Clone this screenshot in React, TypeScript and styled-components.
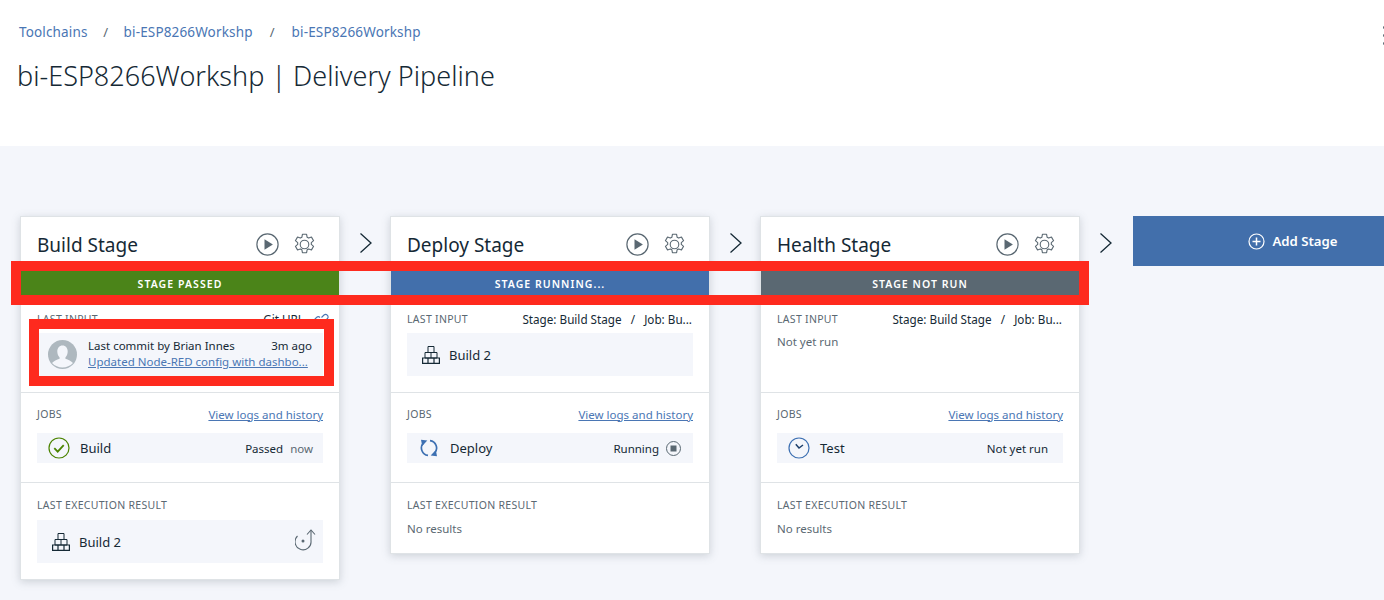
import React from "react";
import styled, { createGlobalStyle } from "styled-components";

const Global = createGlobalStyle`
  html, body { margin: 0; padding: 0; background: #ffffff; }
  body { font-family: "Noto Sans", "Liberation Sans", sans-serif; color: #152935; }
  * { box-sizing: border-box; }
`;

const Page = styled.div`
  position: relative;
  width: 1384px;
  height: 600px;
  overflow: hidden;
  background: #f4f6fb;
`;

const Header = styled.header`
  height: 146px;
  background: #ffffff;
  padding: 23px 0 0 18px;
`;

const CrumbRow = styled.div`
  display: flex;
  align-items: center;
  height: 18px;
  padding-left: 1px;
  margin-right: -5px;
`;

const Crumb = styled.a`
  font-size: 13.5px;
  letter-spacing: 0.15px;
  line-height: 18px;
  color: #4a76b4;
  white-space: nowrap;
`;

const Slash = styled.span<{ $width: number }>`
  font-size: 13px;
  color: #5a6872;
  width: ${(p) => p.$width}px;
  text-align: center;
`;

const Kebab = styled.div`
  margin-left: auto;
  width: 6px;
  display: flex;
  flex-direction: column;
  gap: 5px;
  margin-top: 6px;
`;

const Dot = styled.span`
  width: 3px;
  height: 3px;
  border-radius: 50%;
  background: #5a6872;
`;

const Title = styled.h1`
  margin: 17px 0 0 -1px;
  font-size: 27px;
  letter-spacing: 0.02px;
  line-height: 36px;
  font-weight: 300;
  color: #152935;
  white-space: nowrap;
`;

const Pipeline = styled.main`
  display: flex;
  align-items: flex-start;
  padding: 70px 0 0 20px;
`;

const Card = styled.section`
  flex: none;
  width: 320px;
  background: #ffffff;
  border: 1px solid #dfe3e6;
  box-shadow: 0 2px 8px rgba(90, 104, 114, 0.25);
`;

const CardHead = styled.div`
  height: 54px;
  display: flex;
  align-items: center;
  padding: 1px 24px 0 16px;
`;

const CardTitle = styled.h2`
  margin: 0;
  flex: 1;
  font-size: 19px;
  font-weight: 400;
  color: #152935;
`;

const HeadIcons = styled.div`
  display: flex;
  align-items: center;
  gap: 15px;
`;

const StatusBar = styled.div<{ $color: string }>`
  height: 24px;
  padding-top: 1px;
  background: ${(p) => p.$color};
  color: #ffffff;
  font-size: 10.5px;
  font-weight: 600;
  letter-spacing: 1.05px;
  display: flex;
  align-items: center;
  justify-content: center;
`;

const Section = styled.div<{ $height: number; $top: number }>`
  height: ${(p) => p.$height}px;
  padding: ${(p) => p.$top}px 16px 0;
  border-bottom: 1px solid #dfe3e6;
  &:last-child {
    border-bottom: 0;
    height: auto;
    padding-bottom: 16px;
  }
`;

const SectionHead = styled.div<{ $gap: number }>`
  display: flex;
  align-items: center;
  justify-content: space-between;
  height: 16px;
  margin-bottom: ${(p) => p.$gap}px;
`;

const Label = styled.span`
  font-size: 10.5px;
  letter-spacing: 0.3px;
  color: #5a6872;
`;

const Source = styled.span<{ $flush?: boolean }>`
  display: flex;
  align-items: center;
  gap: 8px;
  margin-right: ${(p) => (p.$flush ? -6 : 1)}px;
  font-size: 11.7px;
  color: #152935;
  white-space: pre;
`;

const LogLink = styled.a`
  font-size: 11.5px;
  color: #4a76b4;
  text-decoration: underline;
`;

const Muted = styled.div`
  font-size: 11.5px;
  line-height: 17px;
  color: #5a6872;
`;

const Tile = styled.div<{ $height: number }>`
  height: ${(p) => p.$height}px;
  background: #f4f6fb;
  display: flex;
  align-items: center;
  font-size: 13px;
  color: #152935;
`;

const TileIcon = styled.span`
  flex: none;
  width: 43px;
  display: flex;
  justify-content: center;
`;

const BlockSlot = styled.span`
  flex: none;
  width: 42px;
  padding-left: 6px;
  display: flex;
  justify-content: center;
`;

const Spacer = styled.span`
  flex: 1;
`;

const JobStatus = styled.span<{ $right: number }>`
  font-size: 11.5px;
  margin-right: ${(p) => p.$right}px;
  display: flex;
  align-items: center;
  gap: 7px;
`;

const Faint = styled.span`
  color: #5a6872;
`;

const Avatar = styled.span`
  flex: none;
  width: 29px;
  height: 29px;
  margin: 0 11px;
  display: flex;
`;

const Commit = styled.div`
  flex: 1;
  min-width: 0;
  margin-top: -1px;
  padding-right: 11px;
  font-size: 11.5px;
  line-height: 16px;
`;

const CommitTop = styled.div`
  display: flex;
  justify-content: space-between;
`;

const CommitLink = styled.a`
  color: #4a76b4;
  text-decoration: underline;
`;

const Arrow = styled.div`
  flex: none;
  width: 50px;
  height: 50px;
  padding: 3px 0 0 2px;
  display: flex;
  align-items: center;
  justify-content: center;
`;

const AddStage = styled.button`
  flex: none;
  width: 320px;
  height: 50px;
  margin-left: 3px;
  border: 0;
  background: #426fab;
  color: #ffffff;
  font-family: inherit;
  font-size: 13.2px;
  font-weight: 600;
  display: flex;
  align-items: center;
  justify-content: center;
  gap: 7px;
`;

const Annotation = styled.div<{ $left: number; $top: number; $width: number; $height: number }>`
  position: absolute;
  left: ${(p) => p.$left}px;
  top: ${(p) => p.$top}px;
  width: ${(p) => p.$width}px;
  height: ${(p) => p.$height}px;
  border: 10px solid #fe2a1e;
  pointer-events: none;
`;

const PlayIcon = () => (
  <svg width="23" height="23" viewBox="0 0 23 23" fill="none">
    <circle cx="11.5" cy="11.5" r="10.6" stroke="#5a6872" strokeWidth="1.2" />
    <path d="M8.5 6.3v10.4l8.4-5.2z" fill="#5a6872" />
  </svg>
);

const GearIcon = () => (
  <svg width="21" height="23" viewBox="0 0 21 23" fill="none" stroke="#5a6872" strokeWidth="1.1" strokeLinejoin="round">
    <path d="M8.4 1.3h4.2l.5 2.9 1.6.9 2.8-1 2.1 3.6-2.3 1.9v1.8l2.3 1.9-2.1 3.6-2.8-1-1.6.9-.5 2.9H8.4l-.5-2.9-1.6-.9-2.8 1-2.1-3.6 2.3-1.9V9.6L1.4 7.700l2.1-3.6 2.8 1 1.6-.9z" />
    <circle cx="10.5" cy="11.5" r="4.3" />
  </svg>
);

const LinkIcon = () => (
  <svg width="17" height="15" viewBox="0 0 17 15" fill="none" stroke="#4a76b4" strokeWidth="1.1">
    <path d="M7.5 9.5 5 12a2.5 2.5 0 0 1-3.5-3.5l3-3a2.5 2.5 0 0 1 3.5 0" />
    <path d="M9.5 5.5 12 3a2.5 2.5 0 0 1 3.5 3.5l-3 3a2.5 2.5 0 0 1-3.5 0" />
  </svg>
);

const BlocksIcon = () => (
  <svg width="18" height="18" viewBox="0 0 18 18" fill="none" stroke="#152935" strokeWidth="1">
    <path d="M6 .5h6v6H6zM3 6.500h12v5.500H3zM9 6.500V12" />
    <path d="M.6 12h16.800v5.400H.6zM6 12v5.400M12 12v5.400" strokeWidth="1.200" />
  </svg>
);

const PassedIcon = () => (
  <svg width="22" height="22" viewBox="0 0 22 22" fill="none" stroke="#4b8400">
    <circle cx="11" cy="11" r="10" strokeWidth="1.2" />
    <path d="m6.3 11.2 3.4 3.4 6-6.4" strokeWidth="1.8" />
  </svg>
);

const RunningIcon = () => (
  <svg width="18" height="18" viewBox="0 0 18 18" fill="none" stroke="#3d70b2" strokeWidth="1.7">
    <path d="M8 16.400A7.500 7.500 0 0 1 3.500 3.800" />
    <path d="M1 .8 7.300 1.500 2.200 7z" fill="#3d70b2" stroke="none" />
    <path d="M10 1.600A7.500 7.500 0 0 1 14.500 14.200" />
    <path d="M17 17.200 10.700 16.500 15.800 11z" fill="#3d70b2" stroke="none" />
  </svg>
);

const StopIcon = () => (
  <svg width="15" height="15" viewBox="0 0 15 15" fill="none">
    <circle cx="7.500" cy="7.500" r="7" stroke="#5a6872" strokeWidth="1" />
    <rect x="4.500" y="4.500" width="6" height="6" fill="#5a6872" />
  </svg>
);

const ClockIcon = () => (
  <svg width="22" height="22" viewBox="0 0 22 22" fill="none">
    <circle cx="11" cy="11" r="10" stroke="#3d70b2" strokeWidth="1.2" />
    <path d="M7.800 7.200 11 11l4-3" stroke="#1d3f6b" strokeWidth="1.500" />
  </svg>
);

const RerunIcon = () => (
  <svg width="22" height="27" viewBox="0 0 22 27" fill="none" stroke="#5a6872" strokeWidth="1.100">
    <path d="M2.500 8A8 8 0 1 0 16 13V2" />
    <path d="M12 6.500 16 2l4 4.500" />
    <circle cx="8" cy="13" r="1.500" fill="#5a6872" stroke="none" />
  </svg>
);

const ChevronIcon = () => (
  <svg width="14" height="22" viewBox="0 0 14 22" fill="none" stroke="#152935" strokeWidth="1.300">
    <path d="m1.500 1.500 10.500 9.500-10.500 9.500" />
  </svg>
);

const PlusIcon = () => (
  <svg width="17" height="17" viewBox="0 0 17 17" fill="none" stroke="#ffffff">
    <circle cx="8.500" cy="8.500" r="7.500" strokeWidth="1.200" />
    <path d="M8.500 4.500v8M4.500 8.500h8" strokeWidth="1.500" />
  </svg>
);

const PersonIcon = () => (
  <svg width="29" height="29" viewBox="0 0 29 29">
    <circle cx="14.500" cy="14.500" r="14.500" fill="#aeb8bf" />
    <path d="M14.500 5.500c3.300 0 5.200 2.700 5.200 6 0 2.600-1 4.600-2.300 5.900v1.300c2.800 1 6 2.200 7.600 4.300a14.500 14.500 0 0 1-21 0c1.600-2.100 4.800-3.300 7.600-4.300v-1.300c-1.300-1.300-2.300-3.300-2.300-5.900 0-3.300 1.900-6 5.200-6z" fill="#f4f6fb" />
  </svg>
);

const BuildTile = ({ height, action }: { height: number; action?: React.ReactNode }) => (
  <Tile $height={height}>
    <BlockSlot>
      <BlocksIcon />
    </BlockSlot>
    Build 2
    <Spacer />
    {action}
  </Tile>
);

const StageSource = () => <Source>{"Stage: Build Stage   /   Job: Bu..."}</Source>;

type StageProps = {
  name: string;
  color: string;
  status: string;
  source: React.ReactNode;
  input: React.ReactNode;
  job: React.ReactNode;
  result: React.ReactNode;
};

const Stage = ({ name, color, status, source, input, job, result }: StageProps) => (
  <Card>
    <CardHead>
      <CardTitle>{name}</CardTitle>
      <HeadIcons>
        <PlayIcon />
        <GearIcon />
      </HeadIcons>
    </CardHead>
    <StatusBar $color={color}>{status}</StatusBar>
    <Section $height={98} $top={16}>
      <SectionHead $gap={6}>
        <Label>LAST INPUT</Label>
        {source}
      </SectionHead>
      {input}
    </Section>
    <Section $height={90} $top={13}>
      <SectionHead $gap={11}>
        <Label>JOBS</Label>
        <LogLink>View logs and history</LogLink>
      </SectionHead>
      {job}
    </Section>
    <Section $height={0} $top={14}>
      <SectionHead $gap={7}>
        <Label>LAST EXECUTION RESULT</Label>
      </SectionHead>
      {result}
    </Section>
  </Card>
);

export default function App() {
  return (
    <Page>
      <Global />
      <Header>
        <CrumbRow>
          <Crumb>Toolchains</Crumb>
          <Slash $width={36}>/</Slash>
          <Crumb>bi-ESP8266Workshp</Crumb>
          <Slash $width={39}>/</Slash>
          <Crumb>bi-ESP8266Workshp</Crumb>
          <Kebab>
            <Dot />
            <Dot />
            <Dot />
          </Kebab>
        </CrumbRow>
        <Title>bi-ESP8266Workshp | Delivery Pipeline</Title>
      </Header>
      <Pipeline>
        <Stage
          name="Build Stage"
          color="#4b8419"
          status="STAGE PASSED"
          source={
            <Source $flush>
              Git URL
              <LinkIcon />
            </Source>
          }
          input={
            <Tile $height={43}>
              <Avatar>
                <PersonIcon />
              </Avatar>
              <Commit>
                <CommitTop>
                  <span>Last commit by Brian Innes</span>
                  <span>3m ago</span>
                </CommitTop>
                <CommitLink>Updated Node-RED config with dashbo...</CommitLink>
              </Commit>
            </Tile>
          }
          job={
            <Tile $height={30}>
              <TileIcon>
                <PassedIcon />
              </TileIcon>
              Build
              <Spacer />
              <JobStatus $right={10}>
                Passed <Faint>now</Faint>
              </JobStatus>
            </Tile>
          }
          result={<BuildTile height={43} action={<JobStatus $right={6}><RerunIcon /></JobStatus>} />}
        />
        <Arrow>
          <ChevronIcon />
        </Arrow>
        <Stage
          name="Deploy Stage"
          color="#426fab"
          status="STAGE RUNNING..."
          source={<StageSource />}
          input={<BuildTile height={43} />}
          job={
            <Tile $height={30}>
              <TileIcon>
                <RunningIcon />
              </TileIcon>
              Deploy
              <Spacer />
              <JobStatus $right={12}>
                Running <StopIcon />
              </JobStatus>
            </Tile>
          }
          result={<Muted>No results</Muted>}
        />
        <Arrow>
          <ChevronIcon />
        </Arrow>
        <Stage
          name="Health Stage"
          color="#5a6872"
          status="STAGE NOT RUN"
          source={<StageSource />}
          input={<Muted>Not yet run</Muted>}
          job={
            <Tile $height={30}>
              <TileIcon>
                <ClockIcon />
              </TileIcon>
              Test
              <Spacer />
              <JobStatus $right={15}>Not yet run</JobStatus>
            </Tile>
          }
          result={<Muted>No results</Muted>}
        />
        <Arrow>
          <ChevronIcon />
        </Arrow>
        <AddStage>
          <PlusIcon />
          Add Stage
        </AddStage>
      </Pipeline>
      <Annotation $left={11} $top={261} $width={1078} $height={44} />
      <Annotation $left={29} $top={319} $width={305} $height={67} />
    </Page>
  );
}
